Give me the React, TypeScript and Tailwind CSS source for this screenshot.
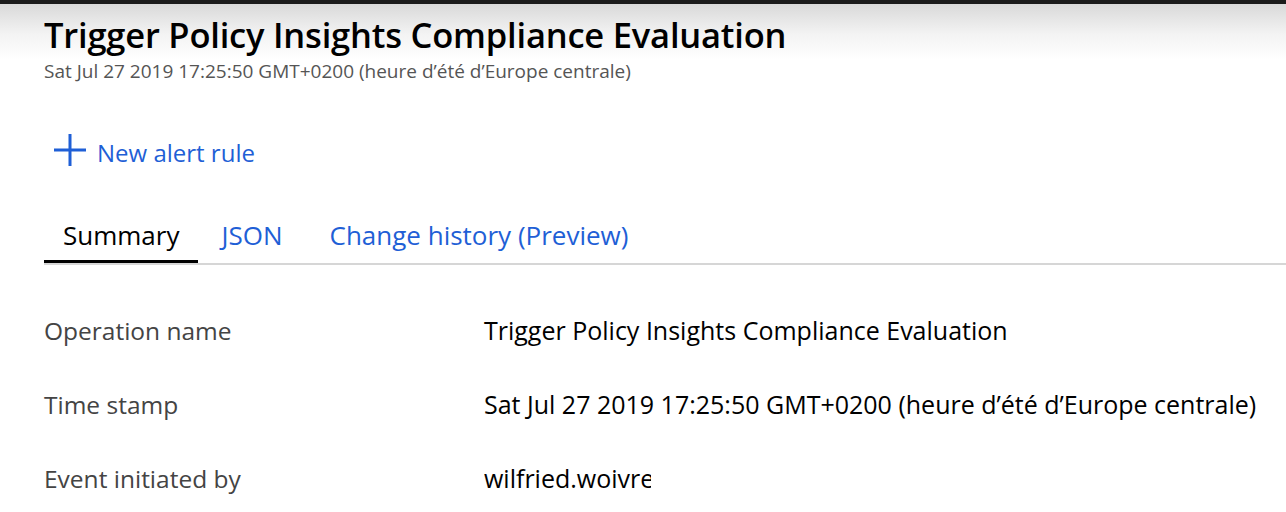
const rows = [
  { label: "Operation name", value: "Trigger Policy Insights Compliance Evaluation" },
  { label: "Time stamp", value: "Sat Jul 27 2019 17:25:50 GMT+0200 (heure d’été d’Europe centrale)" },
  { label: "Event initiated by", value: "wilfried.woivre", clip: true },
];

function PlusIcon() {
  return (
    <svg width="32" height="32" viewBox="0 0 32 32" className="shrink-0">
      <path d="M16 0v32M0 16h32" stroke="currentColor" strokeWidth="3" />
    </svg>
  );
}

export default function App() {
  return (
    <div className="w-[1286px] h-[512px] overflow-hidden bg-white text-black font-['Open_Sans','Noto_Sans',sans-serif]">
      <div className="h-[4px] bg-[#1b1b1b]" />
      <div className="bg-[linear-gradient(to_bottom,#d9d9d9_0px,#f3f3f3_30px,#ffffff_56px)] pl-[44px] pt-[11px]">
        <h1 className="text-[34.5px] leading-[40px] font-semibold tracking-[-0.2px] whitespace-nowrap">
          Trigger Policy Insights Compliance Evaluation
        </h1>
        <div className="mt-[4px] text-[19px] leading-[24px] text-[#555] whitespace-nowrap">
          Sat Jul 27 2019 17:25:50 GMT+0200 (heure d’été d’Europe centrale)
        </div>
      </div>

      <button className="ml-[54px] mt-[51px] flex items-start gap-[11px] text-[#1f5fd6]">
        <PlusIcon />
        <span className="mt-[3px] text-[24px] leading-[32px]">New alert rule</span>
      </button>

      <div className="ml-[44px] mt-[49px] flex gap-[4px] border-b-[2px] border-[#d6d6d6]">
        <div className="px-[19px] pb-[8px] border-b-[3px] border-black text-[26px] leading-[34px]">
          Summary
        </div>
        <div className="pl-[19px] pr-[24px] pb-[11px] text-[26px] leading-[34px] text-[#1f5fd6]">JSON</div>
        <div className="px-[19px] pb-[11px] text-[26px] leading-[34px] text-[#1f5fd6]">
          Change history (Preview)
        </div>
      </div>

      <div className="ml-[44px] mt-[49px] flex flex-col gap-[41px]">
        {rows.map((r) => (
          <div key={r.label} className="flex items-baseline leading-[32px]">
            <div className="w-[440px] shrink-0 text-[24.5px] text-[#444]">{r.label}</div>
            <div
              className={
                r.clip
                  ? "w-[167px] overflow-hidden whitespace-nowrap text-[25px]"
                  : "whitespace-nowrap text-[25px]"
              }
            >
              {r.value}
            </div>
          </div>
        ))}
      </div>
    </div>
  );
}
